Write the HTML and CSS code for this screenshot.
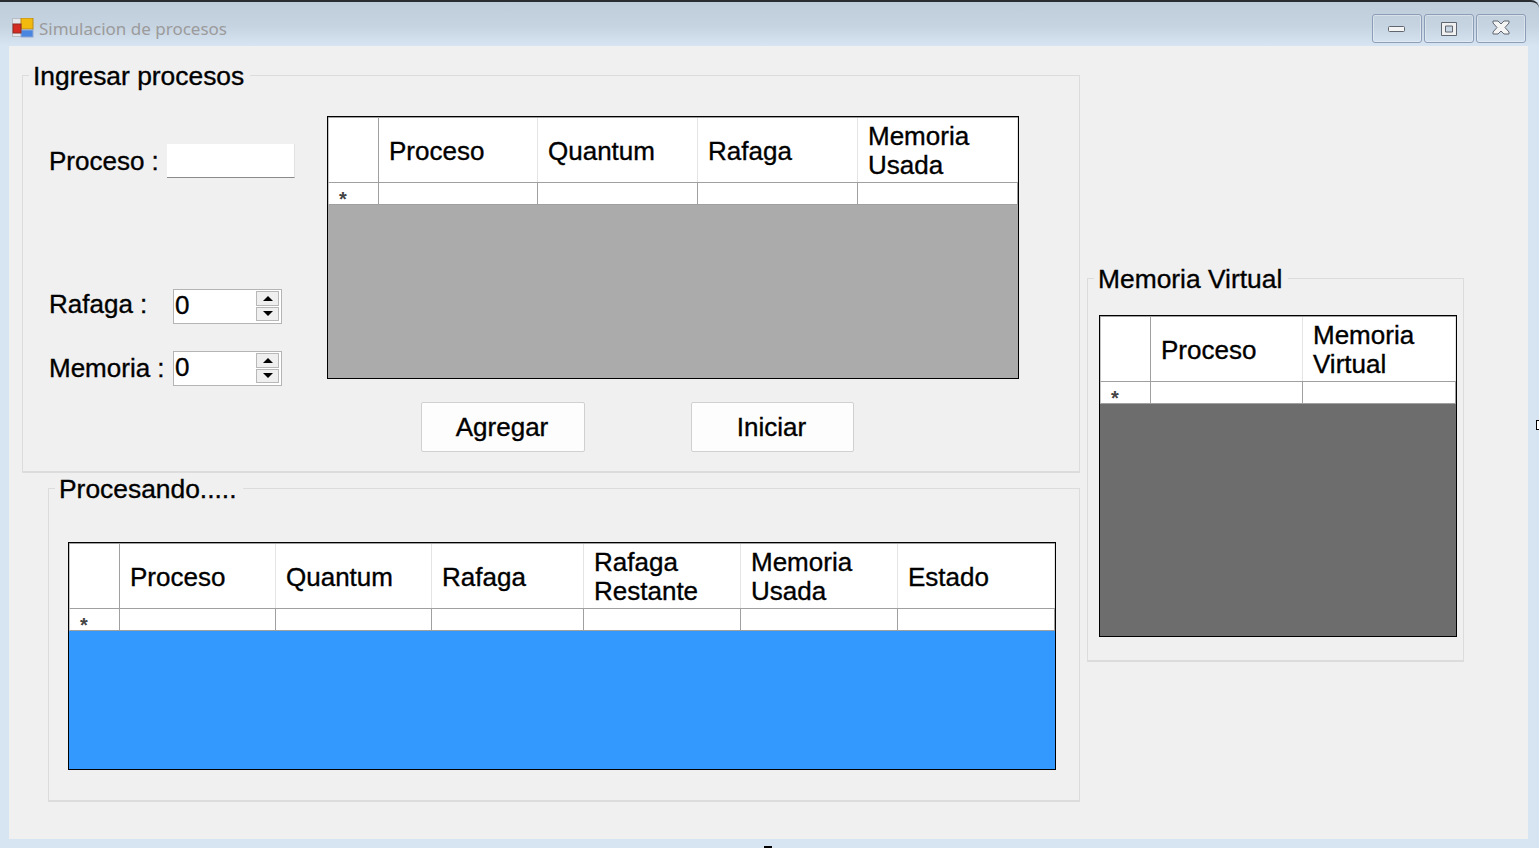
FILE: index.html
```html
<!DOCTYPE html>
<html>
<head>
  <meta charset="UTF-8"/>
  <title>Simulacion de procesos</title>
  <link rel="stylesheet" href="styles.css">
</head>
<body>
<div class="window">
  <div class="titlebar">
    <svg class="appicon" width="22" height="20" viewBox="0 0 22 20">
      <rect x="0.5" y="0.5" width="20" height="18" fill="#e4e6ea" stroke="#b8bcc4"/>
      <rect x="9" y="0" width="12" height="11" fill="#f2b90f" stroke="#b98a1c"/>
      <rect x="9" y="12" width="12" height="7" fill="#4a86e0" stroke="#8fa8d0"/>
      <rect x="1" y="6" width="8" height="9" fill="#d42a22" stroke="#8e2a22"/>
    </svg>
    <span class="title">Simulacion de procesos</span>
    <div class="winbtns">
      <div class="winbtn">
        <svg width="18" height="10" viewBox="0 0 18 10"><rect x="0.5" y="2.500" width="16" height="5" rx="1" fill="#f4f4f4" stroke="#5f6670"/></svg>
      </div>
      <div class="winbtn">
        <svg width="18" height="16" viewBox="0 0 18 16"><path fill-rule="evenodd" d="M1.500 1.500h15v13h-15z M5.500 5h7v6h-7z" fill="#f0f0f0" stroke="#5f6670"/></svg>
      </div>
      <div class="winbtn">
        <svg width="19" height="17" viewBox="0 0 19 17"><path d="M1 1h5l3 3 3-3h5v2l-4 4.500 4 4.500v2h-5l-3-3-3 3h-5v-2l4-4.500-4-4.500z" fill="#f4f4f4" stroke="#5f6670"/></svg>
      </div>
    </div>
  </div>

  <div class="client">
    <div class="leftcol">
      <fieldset class="group group-ingreso">
        <legend>Ingresar procesos</legend>
        <div class="ingreso">
          <div class="campos">
            <div class="campo campo-proceso">
              <span class="lbl">Proceso :</span>
              <div class="textbox"></div>
            </div>
            <div class="campo campo-rafaga">
              <span class="lbl">Rafaga :</span>
              <div class="spinner">
                <span>0</span>
                <div class="arrows"><div class="arrow"><i class="up"></i></div><div class="arrow"><i class="down"></i></div></div>
              </div>
            </div>
            <div class="campo campo-memoria">
              <span class="lbl">Memoria :</span>
              <div class="spinner">
                <span>0</span>
                <div class="arrows"><div class="arrow"><i class="up"></i></div><div class="arrow"><i class="down"></i></div></div>
              </div>
            </div>
          </div>
          <div class="tablacol">
            <div class="dgv dgv-entrada">
              <div class="cols head">
                <div></div><div>Proceso</div><div>Quantum</div><div>Rafaga</div><div>Memoria<br>Usada</div>
              </div>
              <div class="cols newrow">
                <div class="star">*</div><div></div><div></div><div></div><div></div>
              </div>
              <div class="fill"></div>
            </div>
            <div class="acciones">
              <button class="btn">Agregar</button>
              <button class="btn">Iniciar</button>
            </div>
          </div>
        </div>
      </fieldset>

      <fieldset class="group group-procesando">
        <legend>Procesando.....</legend>
        <div class="dgv dgv-procesando">
          <div class="cols head">
            <div></div><div>Proceso</div><div>Quantum</div><div>Rafaga</div><div>Rafaga<br>Restante</div><div>Memoria<br>Usada</div><div>Estado</div>
          </div>
          <div class="cols newrow">
            <div class="star">*</div><div></div><div></div><div></div><div></div><div></div><div></div>
          </div>
          <div class="fill"></div>
        </div>
      </fieldset>
    </div>

    <fieldset class="group group-virtual">
      <legend>Memoria Virtual</legend>
      <div class="dgv dgv-virtual">
        <div class="cols head">
          <div></div><div>Proceso</div><div>Memoria<br>Virtual</div>
        </div>
        <div class="cols newrow">
          <div class="star">*</div><div></div><div></div>
        </div>
        <div class="fill"></div>
      </div>
    </fieldset>
  </div>
</div>
<div class="cursor-mark"></div>
<div class="edge-mark"></div>
</body>
</html>
```

FILE: styles.css
```css
* { box-sizing: border-box; }
html, body { height: 100%; }
body {
  margin: 0;
  background: #d7e4f2;
  color: #000;
  font-family: "Liberation Sans", Arial, sans-serif;
  font-size: 26px;
  -webkit-text-stroke: 0.35px #000;
  overflow: hidden;
}
.window {
  height: 848px;
  border-top: 2px solid #2a2d30;
  border-top-right-radius: 8px;
  background: linear-gradient(#bfcddb 0, #c6d3e1 24px, #d7e4f2 44px);
}

/* title bar */
.titlebar {
  height: 44px;
  display: flex;
  align-items: flex-start;
  padding: 16px 13px 0 12px;
}
.appicon { flex: none; }
.title {
  margin: -1px 0 0 5px;
  font-family: "Noto Sans", sans-serif;
  font-size: 17px;
  line-height: 24px;
  color: #9b9b9b;
  -webkit-text-stroke: 0;
}
.winbtns {
  display: flex;
  gap: 2px;
  margin: -4px 0 0 auto;
}
.winbtn {
  width: 50px;
  height: 29px;
  border: 1px solid #8c9db8;
  border-radius: 3px;
  box-shadow: inset 0 0 0 1px rgba(255,255,255,0.35);
  display: flex;
  align-items: center;
  justify-content: center;
}

/* client area */
.client {
  height: 793px;
  margin: 0 11px 0 9px;
  padding: 14px 0 0 13px;
  background: #f0f0f0;
  display: flex;
  align-items: flex-start;
  gap: 7px;
}
.leftcol { width: 1058px; }

.group {
  margin: 0;
  padding: 0;
  min-width: 0;
  border: 1px solid #dcdcdc;
  border-bottom-width: 2px;
}
.group legend {
  margin-left: 6px;
  padding: 2px 6px 0 4px;
  font-size: 26.4px;
  line-height: 28px;
}
.group-ingreso { height: 413px; }
.group-procesando {
  width: 1032px;
  height: 329px;
  margin-left: 26px;
}
.group-virtual {
  width: 377px;
  height: 399px;
  margin-top: 203px;
}
.dgv-procesando { margin: 39px 0 0 19px; }
.dgv-virtual { margin: 22px 0 0 11px; }

/* left form */
.ingreso {
  display: flex;
  padding-top: 26px;
}
.campos {
  width: 304px;
  padding-left: 26px;
}
.campo {
  display: flex;
  align-items: center;
}
.lbl { white-space: nowrap; }
.campo-proceso { padding-top: 28px; gap: 8px; }
.campo-rafaga { margin-top: 111px; }
.campo-rafaga .lbl { width: 124px; padding-bottom: 4px; }
.campo-memoria { margin-top: 27px; }
.campo-memoria .lbl { width: 124px; }
.textbox {
  width: 128px;
  height: 34px;
  background: #fff;
  border-bottom: 1px solid #8a8a8a;
  border-right: 1px solid #e2e2e2;
}
.spinner {
  width: 109px;
  height: 35px;
  border: 1px solid #b4b4b4;
  background: #fff;
  display: flex;
  justify-content: space-between;
  padding: 1px 2px 2px 1px;
  line-height: 29px;
}
.arrows {
  width: 23px;
  display: flex;
  flex-direction: column;
  gap: 1px;
}
.arrow {
  flex: 1;
  border: 1px solid #b8b8b8;
  background: #efefef;
  display: flex;
  align-items: center;
  justify-content: center;
}
.arrow i {
  width: 0;
  height: 0;
  border-left: 5px solid transparent;
  border-right: 5px solid transparent;
}
.arrow .up { border-bottom: 5px solid #000; }
.arrow .down { border-top: 5px solid #000; }

/* data grids */
.dgv {
  display: flex;
  flex-direction: column;
  border: 1px solid #000;
  padding-top: 1px;
  box-shadow: inset 0 1px 0 #a0a0a0;
}
.dgv-entrada { width: 692px; height: 263px; }
.dgv-procesando { width: 988px; height: 228px; }
.dgv-virtual { width: 358px; height: 322px; }

.cols {
  display: grid;
  background: #fff;
  border-left: 1px solid #c4c4c4;
}
.dgv-entrada .cols { grid-template-columns: 50px 159px 160px 160px 160px; }
.dgv-procesando .cols { grid-template-columns: 50px 156px 156px 152px 157px 157px 157px; }
.dgv-virtual .cols { grid-template-columns: 50px 152px 153px; }

.head {
  height: 65px;
  border-bottom: 1px solid #a0a0a0;
  line-height: 29px;
}
.head > div {
  display: flex;
  align-items: center;
  padding: 2px 0 0 10px;
  border-right: 1px solid #e4e4e4;
}
.head > div:first-child { border-right-color: #a0a0a0; }
.newrow {
  height: 22px;
  border-bottom: 1px solid #a0a0a0;
}
.newrow > div { border-right: 1px solid #a0a0a0; }
.star {
  font-size: 20px;
  font-weight: bold;
  color: #444;
  -webkit-text-stroke: 0;
  line-height: 7px;
  padding: 13px 0 0 10px;
}
.fill { flex: 1; }
.dgv-entrada .fill { background: #ababab; }
.dgv-procesando .fill { background: #3399ff; }
.dgv-virtual .fill { background: #6d6d6d; }

/* buttons */
.acciones {
  display: flex;
  gap: 106px;
  padding: 23px 0 0 94px;
}
.btn {
  width: 164px;
  height: 50px;
  padding: 0 2px 0 0;
  font: inherit;
  color: #000;
  background: #fdfdfd;
  border: 1px solid #d0d0d0;
  border-radius: 2px;
}
.btn + .btn { width: 163px; }

/* stray screen marks */
.cursor-mark {
  position: absolute;
  left: 1536px;
  top: 420px;
  width: 3px;
  height: 10px;
  border: 1px solid #000;
  border-right: 0;
  background: #fff;
}
.edge-mark {
  position: absolute;
  left: 764px;
  top: 846px;
  width: 8px;
  height: 2px;
  background: #000;
}
```
